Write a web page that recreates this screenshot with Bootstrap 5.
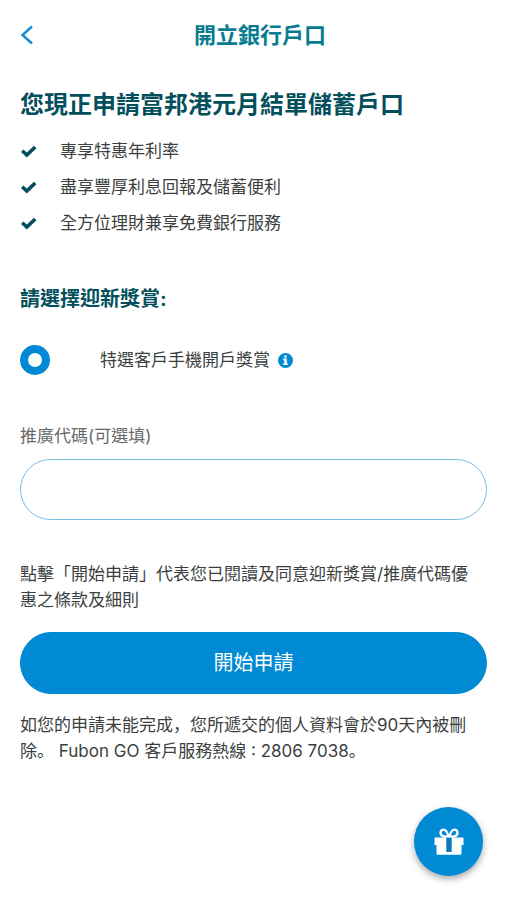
<!DOCTYPE html>
<html lang="zh-Hant">
<head>
<meta charset="utf-8">
<meta name="viewport" content="width=device-width, initial-scale=1">
<title>開立銀行戶口</title>
<link rel="stylesheet" href="https://cdn.jsdelivr.net/npm/bootstrap@5.3.0/dist/css/bootstrap.min.css">
<style>
  :root { --brand: #008ad4; --teal: #067c8e; --deep: #044f5c; --ink: #3c3f42; }
  body { font-family: Inter, "Noto Sans CJK TC", sans-serif; font-size: 17px; line-height: 26px; color: var(--ink); background: #fff; }
  .page-side { padding-left: 20px; padding-right: 20px; }
  .top-bar { height: 70px; }
  .back-btn { line-height: 0; }
  .page-title { font-size: 22px; line-height: 32px; color: var(--teal); }
  .headline { font-size: 24px; line-height: 38px; margin-bottom: 14px; color: var(--deep); }
  .benefits { gap: 10px; margin-bottom: 48px; }
  .benefits li { gap: 23px; }
  .benefits svg { color: var(--deep); }
  .section-title { font-size: 20px; line-height: 30px; margin-bottom: 31px; color: var(--deep); }
  .reward { gap: 50px; margin-bottom: 48px; }
  .reward .form-check-input { width: 30px; height: 30px; border: 8px solid var(--brand); background: #fff; }
  .info-btn { line-height: 0; margin-left: 8px; }
  .promo-label { color: #66696c; margin-bottom: 10px; }
  .promo-input { height: 61px; border: 1px solid #76bce4; padding: 0 28px; margin-bottom: 41px; font-size: 17px; }
  .start-btn { height: 62px; font-size: 20px; margin: 19px 0 18px; --bs-btn-bg: var(--brand); --bs-btn-border-color: var(--brand); --bs-btn-hover-bg: #0079bb; }
  .note { padding-right: 12px; }
  .hotline { font-family: Inter, "Noto Sans CJK SC", sans-serif; }
  .gift-btn { width: 69px; height: 69px; right: 24px; bottom: 24px; background: var(--brand); box-shadow: 0 3px 7px rgba(0, 0, 0, .35); }
</style>
</head>
<body>
<header class="top-bar page-side d-flex align-items-center">
  <button type="button" class="back-btn btn p-0 border-0" aria-label="返回">
    <svg width="13" height="20" viewBox="0 0 13 20" fill="none" stroke="#148fd0" stroke-width="2.5" aria-hidden="true"><path d="M12 1.500 2.500 10 12 18.500"/></svg>
  </button>
  <h1 class="page-title flex-grow-1 text-center fw-bold m-0">開立銀行戶口</h1>
</header>

<main class="page-side pt-3">
  <h2 class="headline fw-bold">您現正申請富邦港元月結單儲蓄戶口</h2>
  <ul class="benefits list-unstyled d-flex flex-column">
    <li class="d-flex align-items-center"><svg width="17" height="13" viewBox="0 0 17 13" fill="none" stroke="currentColor" stroke-width="3.6" aria-hidden="true"><path d="M2.2 5.8 6.8 10.1 15.2 2"/></svg><span>專享特惠年利率</span></li>
    <li class="d-flex align-items-center"><svg width="17" height="13" viewBox="0 0 17 13" fill="none" stroke="currentColor" stroke-width="3.6" aria-hidden="true"><path d="M2.2 5.8 6.8 10.1 15.2 2"/></svg><span>盡享豐厚利息回報及儲蓄便利</span></li>
    <li class="d-flex align-items-center"><svg width="17" height="13" viewBox="0 0 17 13" fill="none" stroke="currentColor" stroke-width="3.6" aria-hidden="true"><path d="M2.2 5.8 6.8 10.1 15.2 2"/></svg><span>全方位理財兼享免費銀行服務</span></li>
  </ul>

  <form>
    <h3 class="section-title fw-bold">請選擇迎新獎賞:</h3>
    <div class="reward d-flex align-items-center">
      <input class="form-check-input m-0 flex-shrink-0" type="radio" name="reward" id="reward-mobile" checked>
      <div class="d-flex align-items-center">
        <label for="reward-mobile">特選客戶手機開戶獎賞</label>
        <button type="button" class="info-btn btn p-0 border-0" aria-label="詳情">
          <svg width="15" height="15" viewBox="0 0 15 15" aria-hidden="true"><circle cx="7.5" cy="7.5" r="7.5" fill="#008ad4"/><path fill="#fff" d="M6.2 2.4h2.5v2.1H6.2zM5.2 5.6h3.6v4.9h1v1.6H5.2v-1.6h1V7.2h-1z"/></svg>
        </button>
      </div>
    </div>

    <label class="promo-label d-block" for="promo">推廣代碼(可選填)</label>
    <input type="text" class="promo-input form-control rounded-pill" id="promo">

    <p class="note m-0">點擊「開始申請」代表您已閱讀及同意迎新獎賞/推廣代碼優惠之條款及細則</p>
    <button type="button" class="start-btn btn btn-primary rounded-pill w-100">開始申請</button>
    <p class="hotline m-0" lang="zh-Hans">如您的申請未能完成，您所遞交的個人資料會於90天內被刪除。 Fubon GO 客戶服務熱線 : 2806 7038。</p>
  </form>
</main>

<button type="button" class="gift-btn btn border-0 rounded-circle position-fixed p-0 d-flex align-items-center justify-content-center" aria-label="迎新獎賞">
  <svg width="30" height="28" viewBox="0 0 30 28" aria-hidden="true">
    <g fill="none" stroke="#fff" stroke-width="2.3"><path d="M14.6 8.2C12 8.8 6.5 9 6.5 5.1 6.5 2.7 8.2 1.7 9.8 1.7c2.6 0 3.8 3.7 4.8 6.5z"/><path d="M15.4 8.2C18 8.8 23.5 9 23.5 5.1 23.5 2.7 21.8 1.7 20.2 1.7c-2.6 0-3.8 3.700-4.8 6.5z"/></g>
    <path fill="#fff" d="M1.5 9.5h27a1 1 0 0 1 1 1V17h-2v8.500a1.300 1.300 0 0 1-1.300 1.300H3.800A1.300 1.300 0 0 1 2.500 25.500V17h-2v-6.500a1 1 0 0 1 1-1z"/>
    <path fill="#0b79bb" d="M12.300 9.800h5.400v14.200h-5.400z"/>
  </svg>
</button>
<script src="https://cdn.jsdelivr.net/npm/bootstrap@5.3.0/dist/js/bootstrap.bundle.min.js"></script>
</body>
</html>
